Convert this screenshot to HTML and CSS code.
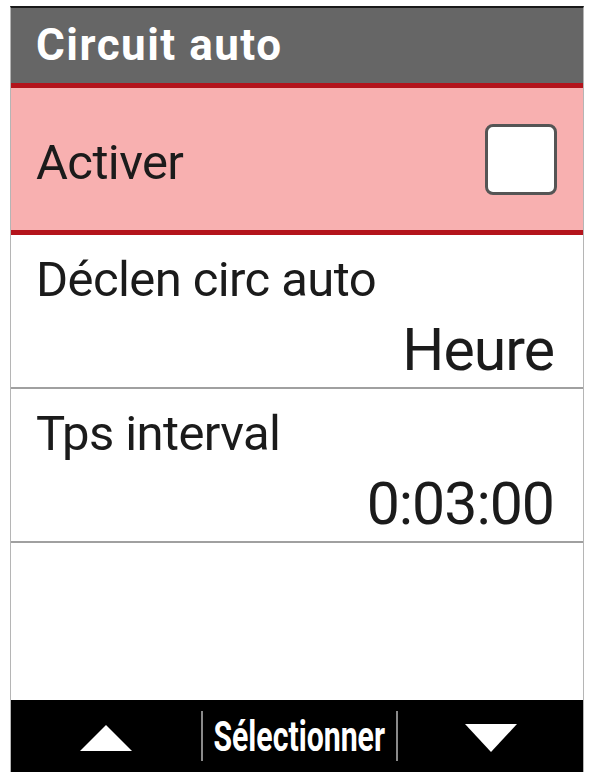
FILE: index.html
```html
<!DOCTYPE html>
<html lang="fr">
<head>
<meta charset="utf-8">
<title>Circuit auto</title>
<link rel="stylesheet" href="styles.css">
</head>
<body>
<div class="screen">
  <div class="header">Circuit auto</div>
  <div class="row row-active">
    <span class="label">Activer</span>
    <span class="checkbox"></span>
  </div>
  <div class="row row-value">
    <span class="label">Déclen circ auto</span>
    <span class="value">Heure</span>
  </div>
  <div class="row row-value">
    <span class="label">Tps interval</span>
    <span class="value">0:03:00</span>
  </div>
  <div class="spacer"></div>
  <div class="footer">
    <div class="btn btn-left">
      <svg class="tri" width="54" height="28" viewBox="0 0 54 28"><polygon points="27,1 53,27 1,27" fill="#fff"/></svg>
    </div>
    <div class="sep"></div>
    <div class="btn btn-mid"><span class="select">Sélectionner</span></div>
    <div class="sep"></div>
    <div class="btn btn-right">
      <svg class="tri" width="54" height="30" viewBox="0 0 54 30"><polygon points="1,1 53,1 27,29" fill="#fff"/></svg>
    </div>
  </div>
</div>
</body>
</html>
```

FILE: styles.css
```css
html, body {
  margin: 0;
  padding: 0;
  background: #fff;
}
body {
  font-family: Roboto, "Liberation Sans", sans-serif;
  color: #1b1b1b;
}
.screen {
  margin: 6px 0 0 10px;
  width: 574px;
  height: 766px;
  box-sizing: border-box;
  border-top: 2px solid #1a1a1a;
  border-left: 1px solid #b5b5b5;
  border-right: 1px solid #b5b5b5;
  display: flex;
  flex-direction: column;
}
.header {
  height: 75px;
  background: #666666;
  color: #fff;
  font-weight: bold;
  font-size: 44px;
  letter-spacing: 1.5px;
  padding-left: 25px;
  display: flex;
  align-items: center;
  box-sizing: border-box;
  padding-bottom: 2px;
}
.row {
  box-sizing: border-box;
  padding: 0 29px 0 25px;
}
.row-active {
  height: 152px;
  background: #f8b0b0;
  border-top: 5px solid #b4141c;
  border-bottom: 5px solid #b4141c;
  display: flex;
  align-items: center;
  justify-content: space-between;
  padding-top: 6px;
  padding-right: 26px;
}
.label {
  font-size: 49px;
  letter-spacing: -0.6px;
}
.checkbox {
  width: 72px;
  height: 71px;
  background: #fff;
  border: 3px solid #555;
  border-radius: 8px;
  box-sizing: border-box;
  margin-top: -6px;
}
.row-value {
  height: 154px;
  border-bottom: 2px solid #a0a0a0;
  display: flex;
  flex-direction: column;
  padding-top: 17px;
}
.row-value .label {
  line-height: 56px;
}
.value {
  align-self: flex-end;
  font-size: 59px;
  line-height: 64px;
  margin-top: 10px;
  letter-spacing: -1px;
}
.spacer {
  flex: 1;
}
.footer {
  height: 72px;
  background: #000;
  display: flex;
  align-items: center;
}
.btn {
  display: flex;
  justify-content: center;
  align-items: center;
  padding-top: 4px;
  min-width: 0;
}
.btn-left {
  flex: 0 0 190px;
}
.btn-right {
  flex: 1 1 0;
}
.btn-mid {
  flex: 0 0 193px;
  padding-top: 0;
  overflow: visible;
}
.sep {
  flex: 0 0 2px;
  height: 50px;
  background: #8a8a8a;
}
.select {
  display: inline-block;
  color: #fff;
  font-weight: bold;
  font-size: 42px;
  font-family: Roboto, "Liberation Sans", sans-serif;
  transform: scaleX(0.72);
  white-space: nowrap;
}
.tri {
  display: block;
}
```
